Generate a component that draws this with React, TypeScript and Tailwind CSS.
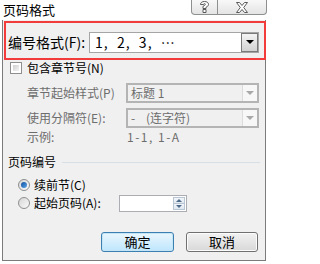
import React from "react";

const font = "font-['Noto_Sans_CJK_SC','Noto_Sans',sans-serif]";

function Radio({ checked }: { checked?: boolean }) {
  return (
    <div className="w-[12px] h-[12px] rounded-full border border-[#8e8f8f] bg-gradient-to-br from-[#d6d6d6] to-[#fbfbfb] flex items-center justify-center">
      {checked && (
        <div className="w-[6px] h-[6px] rounded-full bg-gradient-to-br from-[#0f4e9c] to-[#5aa8ec]" />
      )}
    </div>
  );
}

function DisabledCombo({ children }: { children: React.ReactNode }) {
  return (
    <div className="w-[133px] h-[20px] border-2 border-[#b4b4b4] bg-[#f0f0f0] flex items-stretch">
      <span className="pl-[3px] leading-[16px] text-[#6d6d6d] whitespace-pre">{children}</span>
      <div className="ml-auto w-[15px] bg-[#f7f7f7] border-l border-[#dcdcdc] flex items-center justify-center">
        <div className="w-0 h-0 border-l-[4px] border-r-[4px] border-t-[4px] border-l-transparent border-r-transparent border-t-[#a8a8a8]" />
      </div>
    </div>
  );
}

export default function App() {
  return (
    <div className={`w-[269px] h-[264px] bg-white text-[12px] text-black overflow-hidden ${font}`}>
      {/* title bar */}
      <div className="flex h-[20px]">
        <span className="pl-[3px] pt-[2px] text-[13px] leading-[16px]">页码格式</span>
        <div className="ml-auto mr-[2px] flex h-[15px] border border-t-0 border-[#8e8f8f] rounded-b-[4px] bg-gradient-to-b from-[#f8f8f8] to-[#e4e4e4] overflow-hidden">
          <div className="w-[26px] flex items-center justify-center border-r border-[#8e8f8f]">
            <svg width="9" height="12" viewBox="0 0 9 12">
              <path
                d="M0.5 3.5 C0.5 1.5 2.2 0.5 4.5 0.5 C6.8 0.5 8.5 1.6 8.5 3.4 C8.5 5 7.2 5.6 6 6.2 V7.5 H3 V5.3 C4.5 4.6 5.3 4.3 5.3 3.4 C5.3 2.8 5 2.6 4.5 2.6 C3.9 2.6 3.6 3 3.6 3.5 Z M3 8.5 H6 V11.5 H3 Z"
                fill="#fff"
                stroke="#5a5a5a"
                strokeWidth="1"
              />
            </svg>
          </div>
          <div className="w-[48px] flex items-center justify-center">
            <svg width="14" height="11" viewBox="0 0 14 11">
              <path
                d="M1.5 0.5 H4.5 L7 3.5 L9.5 0.5 H12.5 L8.7 5.5 L12.5 10.5 H9.5 L7 7.5 L4.5 10.5 H1.5 L5.3 5.5 Z"
                fill="#fff"
                stroke="#5a5a5a"
                strokeWidth="1"
              />
            </svg>
          </div>
        </div>
      </div>

      {/* dialog body */}
      <div className="ml-[2px] w-[264px] h-[241px] border-x border-b border-[#7b7b7b] bg-[#f0f0f0] flex flex-col">
        {/* highlighted row */}
        <div className="mt-[1px] ml-[1px] mr-[-1px] h-[39px] border-2 border-[#f23c3c] flex items-center pt-[3px]">
          <span className="w-[83px] pl-[2px] text-[14px] leading-[18px]">编号格式(F):</span>
          <div className="w-[170px] h-[21px] border border-[#a5a5a5] bg-white flex items-stretch">
            <span className="pl-[5px] text-[14px] leading-[19px] tracking-[1px] whitespace-pre">1,  2,  3,  …</span>
            <div className="ml-auto w-[17px] border border-[#7a7a7a] bg-gradient-to-b from-[#f4f4f4] to-[#d2d2d2] flex items-center justify-center">
              <div className="w-0 h-0 border-l-[4px] border-r-[4px] border-t-[4px] border-l-transparent border-r-transparent border-t-black" />
            </div>
          </div>
        </div>

        {/* include chapter number */}
        <div className="mt-[2px] pl-[7px] h-[12px] flex items-center">
          <div className="w-[12px] h-[12px] border border-[#8e8f8f] bg-white p-[2px]">
            <div className="w-full h-full bg-gradient-to-br from-[#cfcfcf] to-[#f4f4f4]" />
          </div>
          <span className="ml-[5px] leading-[14px]">包含章节号(N)</span>
        </div>

        <div className="mt-[9px] pl-[24px] h-[20px] flex items-center">
          <span className="w-[99px] text-[#6d6d6d]">章节起始样式(P)</span>
          <DisabledCombo>标题 1</DisabledCombo>
        </div>
        <div className="mt-[5px] pl-[24px] h-[20px] flex items-center">
          <span className="w-[99px] text-[#6d6d6d]">使用分隔符(E):</span>
          <DisabledCombo>{"-    (连字符)"}</DisabledCombo>
        </div>
        <div className="mt-[1px] pl-[24px] h-[16px] flex items-center">
          <span className="w-[100px] text-[#6d6d6d]">示例:</span>
          <span className="text-[#6d6d6d] tracking-[1.5px]">1-1, 1-A</span>
        </div>

        {/* page numbering group */}
        <div className="mt-[9px] pl-[5px] pr-[5px] h-[16px] flex items-center">
          <span className="leading-[16px]">页码编号</span>
          <div className="ml-[6px] flex-1 h-px bg-[#d5dfe5]" />
        </div>
        <div className="mt-[8px] pl-[15px] h-[14px] flex items-center">
          <Radio checked />
          <span className="ml-[4px]">续前节(C)</span>
        </div>
        <div className="mt-[2px] pl-[15px] h-[18px] flex items-center">
          <Radio />
          <span className="ml-[4px] w-[85px]">起始页码(A):</span>
          <div className="w-[68px] h-[17px] border border-[#abadb3] bg-white flex justify-end p-[1px]">
            <div className="w-[12px] flex flex-col">
              <div className="flex-1 bg-gradient-to-b from-[#f2f6fa] to-[#dfe8f0] border border-[#b8c6d4] flex items-center justify-center">
                <div className="w-0 h-0 border-l-[3px] border-r-[3px] border-b-[3px] border-l-transparent border-r-transparent border-b-[#4d6a8a]" />
              </div>
              <div className="flex-1 bg-gradient-to-b from-[#f2f6fa] to-[#dfe8f0] border border-t-0 border-[#b8c6d4] flex items-center justify-center">
                <div className="w-0 h-0 border-l-[3px] border-r-[3px] border-t-[3px] border-l-transparent border-r-transparent border-t-[#4d6a8a]" />
              </div>
            </div>
          </div>
        </div>

        {/* buttons */}
        <div className="mt-[20px] pr-[7px] flex justify-end gap-[12px]">
          <button className="w-[73px] h-[20px] rounded-[3px] border border-[#3c7fb1] bg-gradient-to-b from-[#eaf6fd] to-[#bee6fd] shadow-[inset_0_0_0_1px_#c4e5f6] text-[13px] leading-[16px]">
            确定
          </button>
          <button className="w-[72px] h-[20px] rounded-[3px] border border-[#707070] bg-gradient-to-b from-[#f2f2f2] to-[#d8d8d8] shadow-[inset_0_0_0_1px_#fcfcfc] text-[13px] leading-[16px]">
            取消
          </button>
        </div>
      </div>
    </div>
  );
}
